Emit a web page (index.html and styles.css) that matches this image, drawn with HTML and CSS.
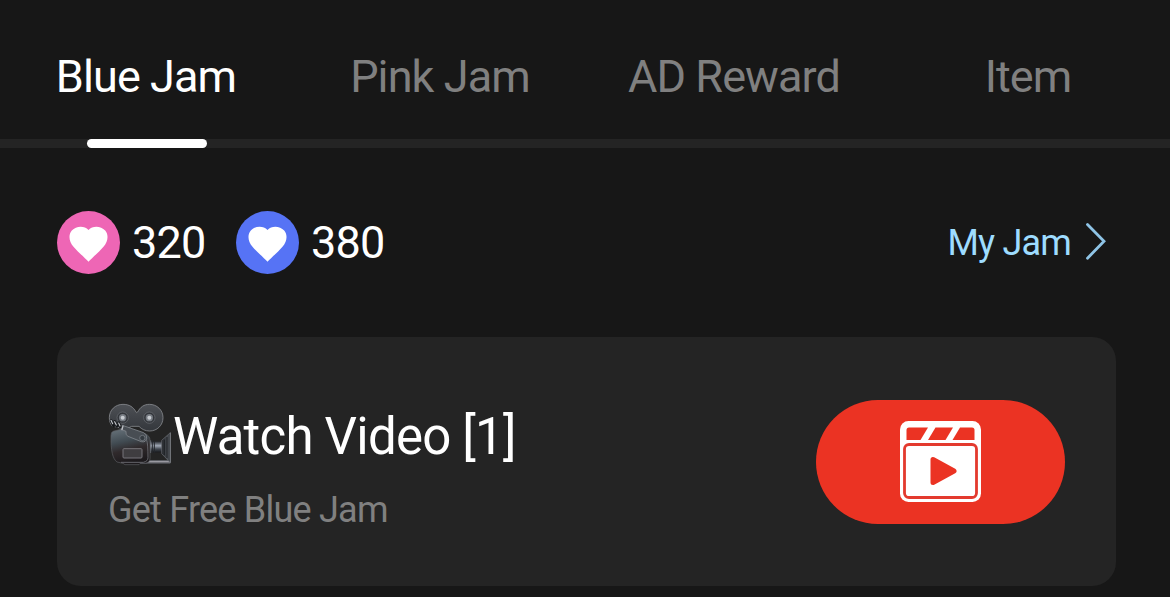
FILE: index.html
```html
<!DOCTYPE html>
<html lang="en">
<head>
<meta charset="utf-8">
<title>Jam Shop</title>
<link rel="stylesheet" href="styles.css">
</head>
<body>
<nav class="tabs">
  <a class="tab tab-active">Blue Jam</a>
  <a class="tab">Pink Jam</a>
  <a class="tab">AD Reward</a>
  <a class="tab">Item</a>
</nav>
<div class="track"><div class="indicator"></div></div>
<main class="content">
  <section class="wallet">
    <div class="balance">
      <svg class="coin" viewBox="0 0 63 63"><circle cx="31.5" cy="31.5" r="31.5" fill="#ee66b5"/><path d="M31.5 50.8C28 46.8 21 41.2 16.500 35.800C11.800 30.200 11.200 23.700 14.800 19.500C19.200 14.600 27.500 14.400 31.500 19.000C35.500 14.400 43.800 14.600 48.200 19.500C51.800 23.700 51.200 30.200 46.500 35.800C42 41.200 35 46.800 31.500 50.800Z" fill="#fff"/></svg>
      <span class="amount">320</span>
    </div>
    <div class="balance">
      <svg class="coin" viewBox="0 0 63 63"><circle cx="31.5" cy="31.5" r="31.5" fill="#5673f5"/><path d="M31.5 50.8C28 46.8 21 41.2 16.500 35.800C11.800 30.200 11.200 23.700 14.800 19.500C19.200 14.600 27.500 14.400 31.500 19.000C35.500 14.400 43.800 14.600 48.200 19.500C51.800 23.700 51.200 30.200 46.500 35.800C42 41.200 35 46.800 31.500 50.800Z" fill="#fff"/></svg>
      <span class="amount">380</span>
    </div>
    <a class="my-jam"><span class="my-jam-text">My Jam</span>
      <svg class="chevron" viewBox="0 0 20 37"><path d="M1.500 1.500L18 18.300L1.500 35.200" fill="none" stroke="#8fc4e6" stroke-width="2.800" stroke-linecap="round"/></svg>
    </a>
  </section>
  <section class="card">
    <div class="card-text">
      <div class="title">
        <svg class="camera" viewBox="39 39 192 189">
          <defs>
            <linearGradient id="body" x1="0" y1="0" x2="0.25" y2="1"><stop offset="0" stop-color="#69747c"/><stop offset=".4" stop-color="#414b52"/><stop offset=".65" stop-color="#302a2c"/><stop offset="1" stop-color="#1d1a1d"/></linearGradient>
            <linearGradient id="reel" x1="0" y1="0" x2="0" y2="1"><stop offset="0" stop-color="#4d5055"/><stop offset="1" stop-color="#34373c"/></linearGradient>
            <linearGradient id="lens" x1="0" y1="0" x2="0" y2="1"><stop offset="0" stop-color="#25282d"/><stop offset=".4" stop-color="#a0a8b5"/><stop offset=".7" stop-color="#424851"/><stop offset="1" stop-color="#17191d"/></linearGradient>
            <linearGradient id="hood"><stop offset="0" stop-color="#24272b"/><stop offset=".7" stop-color="#4a4e54"/><stop offset="1" stop-color="#303338"/></linearGradient>
          </defs>
          <path d="M84 43C103 43 115 51 123 66Q125 70 128 66C136 51 147 43 163 43C186 43 204 60 204 83C204 106 186 123 164 123C151 123 140 118 132 109L110 109L92 118L52 108C45 101 43 92 43 83C43 60 61 43 84 43Z" fill="url(#reel)" stroke="#85888d" stroke-width="2.500"/>
          <g fill="#33363b" stroke="#6c7076" stroke-width="2"><circle cx="83" cy="83" r="17"/><circle cx="163" cy="83" r="17"/></g>
          <g fill="#777c83"><circle cx="83" cy="83" r="11"/><circle cx="163" cy="83" r="11"/></g>
          <g fill="#c8ccd1"><circle cx="83" cy="83" r="6"/><circle cx="163" cy="83" r="6"/></g>
          <path d="M132 210H226V221H132Z" fill="#5a5c62"/><path d="M138 215H226" stroke="#9998a0" stroke-width="4"/>
          <path d="M164 154H202V187H164Z" fill="url(#lens)"/><path d="M172 150V190M178 152V188" stroke="#25282d" stroke-width="3"/><path d="M167 151V189" stroke="#858b94" stroke-width="2"/>
          <path d="M200 151L226 128V218L200 191Z" fill="url(#hood)" stroke="#696d72" stroke-width="2"/><path d="M208 149V195M216 141V204" stroke="#1e2125" stroke-width="3"/><path d="M226 128V218" stroke="#777b80" stroke-width="3"/>
          <path d="M54 124L78 118L150 131Q165 137 165 151V205Q165 218 150 220H136L132 224H90L84 220L66 216C53 207 47 181 48 137Q48 127 54 124Z" fill="url(#body)" stroke="#5c5e62" stroke-width="2"/>
          <path d="M155 151Q159 160 159 203Q159 214 145 217H78" fill="none" stroke="#72747a" stroke-width="2.500"/>
          <path d="M82 106L146 128Q156 132 155 145Q153 158 139 155L99 139Q91 136 93 124L78 118Z" fill="#484d53" stroke="#81858b" stroke-width="2.500"/>
          <circle cx="142" cy="144" r="8" fill="#343a40" stroke="#81868c" stroke-width="2"/>
          <rect x="84" y="176" width="57" height="28" rx="3" fill="#3f3d40" stroke="#77757a" stroke-width="3"/>
          <g fill="none" stroke-linecap="round"><path d="M48 91L56 108M59 94L66 109M71 98L76 111" stroke="#15171a" stroke-width="8"/><path d="M48 91L53 101M59 95L64 105M71 99L75 108M84 108L81 119" stroke="#c3c6cb" stroke-width="3.500"/></g>
        </svg><span class="title-text">Watch Video [1]</span>
      </div>
      <div class="subtitle">Get Free Blue Jam</div>
    </div>
    <button class="watch" aria-label="Watch video">
      <svg class="clapper" viewBox="0 0 81 81"><rect width="81" height="81" rx="8.500" fill="#fff"/>
        <g fill="#eb3323"><path d="M9 6.500H28L20.500 19H6.500V9Q6.500 6.500 9 6.500Z"/><path d="M35.500 6.500H53L45.500 19H28Z"/><path d="M60 6.500H72Q74.500 6.500 74.500 9V19H52.500Z"/></g>
        <rect x="4.500" y="23.500" width="72" height="53" rx="4.500" fill="#fff" stroke="#e33a2e" stroke-width="2.800"/>
        <path d="M33 38.500V61.500L54 50Z" fill="#eb3323" stroke="#eb3323" stroke-width="5" stroke-linejoin="round"/>
      </svg>
    </button>
  </section>
</main>
</body>
</html>
```
FILE: styles.css
```css
* { box-sizing: border-box; }
body { margin: 0; height: 597px; overflow: hidden; background: #171717; color: #fff; font-family: Roboto, sans-serif; }
.tabs { display: flex; height: 139px; padding-top: 47px; overflow: hidden; }
.tab { flex: 0 0 294px; padding-right: 2px; text-align: center; font-size: 45px; line-height: 60px; letter-spacing: -0.9px; color: #808080; white-space: nowrap; }
.tab-active { color: #fff; }
.track { height: 9px; padding-left: 87px; background: #242424; }
.indicator { width: 120px; height: 9px; border-radius: 4.5px; background: #fff; }
.content { padding: 63px 54px 0 57px; }
.wallet { display: flex; align-items: center; height: 63px; }
.balance { display: flex; align-items: center; width: 179px; gap: 12px; }
.coin { width: 63px; height: 63px; flex: none; }
.amount { font-size: 45px; line-height: 60px; letter-spacing: -0.8px; }
.my-jam { display: flex; align-items: center; gap: 15px; margin-left: auto; margin-right: 10px; color: #9edcff; }
.my-jam-text { font-size: 36px; line-height: 48px; letter-spacing: -0.8px; }
.chevron { width: 20px; height: 37px; margin-top: -3px; }
.card { display: flex; align-items: center; justify-content: space-between; height: 249px; margin-top: 63px; padding: 0 51px; border-radius: 24px; background: #242424; }
.card-text { height: 249px; padding-top: 66px; }
.title { display: flex; align-items: flex-start; height: 64px; gap: 1px; }
.camera { width: 64px; height: 63px; }
.title-text { padding-top: 2px; font-size: 51px; line-height: 64px; letter-spacing: -0.78px; white-space: nowrap; }
.subtitle { margin-top: 19px; font-size: 36px; line-height: 48px; letter-spacing: -0.77px; color: #808080; }
.watch { display: flex; align-items: center; justify-content: center; width: 249px; height: 124px; padding: 0; border: 0; border-radius: 62px; background: #eb3323; }
.clapper { width: 81px; height: 81px; }
```
